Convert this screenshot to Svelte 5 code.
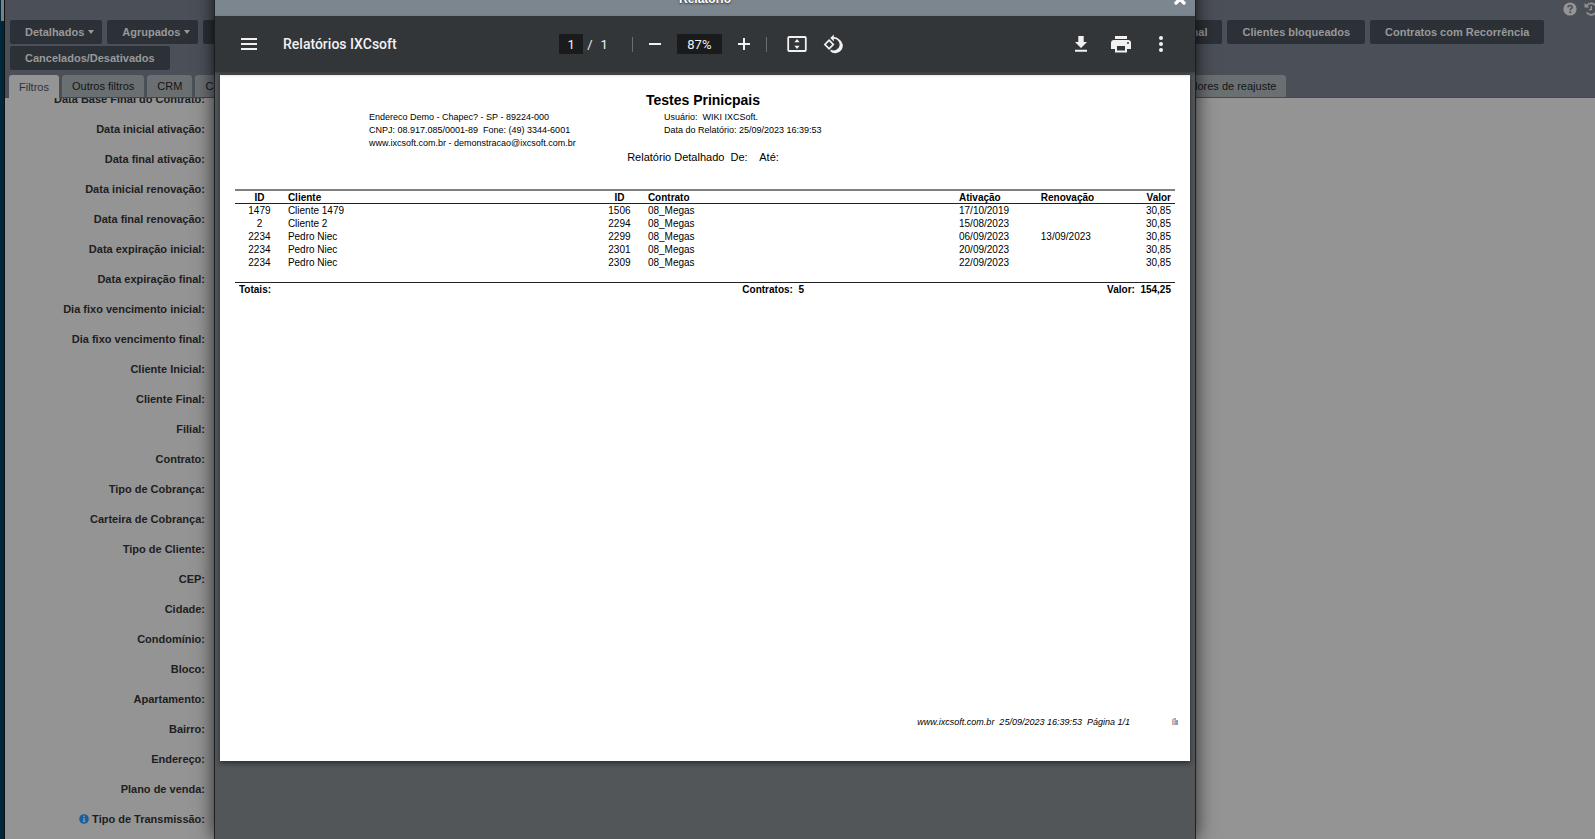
<script lang="ts">
    type Contract = {
        clientId: number,
        client: string,
        id: number,
        plan: string,
        activated: string,
        renewed: string,
        value: string,
    };

    const fields = [
        'Data Base Final do Contrato',
        'Data inicial ativação',
        'Data final ativação',
        'Data inicial renovação',
        'Data final renovação',
        'Data expiração inicial',
        'Data expiração final',
        'Dia fixo vencimento inicial',
        'Dia fixo vencimento final',
        'Cliente Inicial',
        'Cliente Final',
        'Filial',
        'Contrato',
        'Tipo de Cobrança',
        'Carteira de Cobrança',
        'Tipo de Cliente',
        'CEP',
        'Cidade',
        'Condomínio',
        'Bloco',
        'Apartamento',
        'Bairro',
        'Endereço',
        'Plano de venda',
        'Tipo de Transmissão',
    ];

    const contracts: Contract[] = [
        { clientId: 1479, client: 'Cliente 1479', id: 1506, plan: '08_Megas', activated: '17/10/2019', renewed: '', value: '30,85' },
        { clientId: 2, client: 'Cliente 2', id: 2294, plan: '08_Megas', activated: '15/08/2023', renewed: '', value: '30,85' },
        { clientId: 2234, client: 'Pedro Niec', id: 2299, plan: '08_Megas', activated: '06/09/2023', renewed: '13/09/2023', value: '30,85' },
        { clientId: 2234, client: 'Pedro Niec', id: 2301, plan: '08_Megas', activated: '20/09/2023', renewed: '', value: '30,85' },
        { clientId: 2234, client: 'Pedro Niec', id: 2309, plan: '08_Megas', activated: '22/09/2023', renewed: '', value: '30,85' },
    ];

    let page = $state('1');
    let zoom = $state('87%');
</script>

<div class="app">
    <aside class="rail"><div class="rail-top"></div></aside>

    <main class="window">
        <header>
            <div class="window-tools">
                <button aria-label="Ajuda">
                    <svg viewBox="0 0 14 14" width="14" height="14">
                        <circle cx="7" cy="7" r="6.6" fill="#949494" />
                        <path d="M4.9 5.4C5 4.1 5.9 3.5 7.1 3.5c1.2 0 2.1.7 2.1 1.8 0 1.4-2 1.5-2 3" fill="none" stroke="#4b5058" stroke-width="1.6" />
                        <rect x="6.3" y="9.3" width="1.8" height="1.7" fill="#4b5058" />
                    </svg>
                </button>
                <button aria-label="Histórico">
                    <svg viewBox="0 0 14 14" width="14" height="14" fill="none" stroke="#949494" stroke-width="1.7">
                        <path d="M2.2 4.2A5.7 5.7 0 1 1 2.6 10.6" />
                        <path d="M7.3 4v3.6H5" stroke-width="1.3" />
                        <path d="M.6 1v4.6h4.6z" fill="#949494" stroke="none" />
                    </svg>
                </button>
            </div>
            <nav class="actions">
                <button class="drop">Detalhados <i class="caret"></i></button>
                <button class="drop">Agrupados <i class="caret"></i></button>
                <button class="wide">Adicional</button>
                <button>Clientes bloqueados</button>
                <button>Contratos com Recorrência</button>
                <button>Cancelados/Desativados</button>
            </nav>
            <nav class="tabs">
                <button class="active">Filtros</button>
                <button>Outros filtros</button>
                <button>CRM</button>
                <button class="long">Contrato</button>
                <button>Valores de reajuste</button>
            </nav>
        </header>

        <div class="form-scroll">
            <form>
                {#each fields as field, i}
                    <div class="field">
                        <label for="field-{i}">
                            {#if field === 'Tipo de Transmissão'}
                                <svg class="info" viewBox="0 0 10 10" width="10" height="10">
                                    <circle cx="5" cy="5" r="4.8" fill="#1a5f9e" />
                                    <path d="M4 4h1.8v3.2h.7V8H3.8v-.8h.6V4.7H4zM4.3 1.8h1.5v1.3H4.3z" fill="#999" />
                                </svg>
                            {/if}{field}:</label>
                        <input id="field-{i}" type="text" />
                    </div>
                {/each}
            </form>
        </div>
    </main>

    <section class="modal">
        <div class="modal-title">
            <span>Relatório</span>
            <button aria-label="Fechar">
                <svg viewBox="0 0 14 14" width="14" height="14">
                    <path d="M3 3l8 8M11 3l-8 8" stroke="#fff" stroke-width="3.4" stroke-linecap="round" />
                </svg>
            </button>
        </div>

        <div class="toolbar">
            <div class="start">
                <button aria-label="Menu">
                    <svg viewBox="0 0 24 24"><path d="M4 6h16v2H4zM4 11h16v2H4zM4 16h16v2H4z" /></svg>
                </button>
                <h1>Relatórios IXCsoft</h1>
            </div>
            <div class="center">
                <input class="page-number" aria-label="Página" bind:value={page} />
                <span class="slash">/</span>
                <span class="total">1</span>
                <span class="separator"></span>
                <button aria-label="Diminuir zoom">
                    <svg viewBox="0 0 24 24"><path d="M6 11h12v2H6z" /></svg>
                </button>
                <input class="zoom" aria-label="Zoom" bind:value={zoom} />
                <button aria-label="Aumentar zoom">
                    <svg viewBox="0 0 24 24"><path d="M18 13h-5v5h-2v-5H6v-2h5V6h2v5h5z" /></svg>
                </button>
                <span class="separator after"></span>
                <button class="fit" aria-label="Ajustar à página">
                    <svg viewBox="0 0 24 24">
                        <rect x="3.2" y="5" width="17.600" height="14" rx="1" fill="none" stroke="#f1f1f1" stroke-width="1.8" />
                        <path d="M12 7l2.600 3.200H9.400zM12 17l2.600-3.200H9.400z" />
                    </svg>
                </button>
                <button aria-label="Girar">
                    <svg viewBox="0 0 24 24">
                        <path d="M7.34 6.41L.86 12.9l6.49 6.48 6.49-6.48zM3.69 12.9l3.66-3.66L11 12.9l-3.66 3.66zM19.36 6.64A8.95 8.95 0 0 0 13 4V.76L8.76 5 13 9.24V6a7 7 0 1 1-3.03 13.31l-1.49 1.49A9 9 0 1 0 19.36 6.64z" transform="translate(2 1.8) scale(.83)" />
                    </svg>
                </button>
            </div>
            <div class="end">
                <button aria-label="Baixar">
                    <svg viewBox="0 0 24 24"><path d="M18 10h-3.300V4H9.300v6H6l6 6zM6 17.700v2h12v-2z" /></svg>
                </button>
                <button aria-label="Imprimir">
                    <svg viewBox="0 0 24 24">
                        <path d="M19 8H5a3 3 0 0 0-3 3v6h4v3.500h12V17h4v-6a3 3 0 0 0-3-3zm-3 10.500H8V14h8zm3-6.500a1 1 0 1 1 0-2 1 1 0 0 1 0 2zM18 4H6v3h12z" />
                    </svg>
                </button>
                <button aria-label="Mais ações">
                    <svg viewBox="0 0 24 24"><circle cx="12" cy="6" r="2" /><circle cx="12" cy="12" r="2" /><circle cx="12" cy="18" r="2" /></svg>
                </button>
            </div>
        </div>

        <div class="viewer">
            <article class="sheet">
                <h2>Testes Prinicpais</h2>
                <div class="heading">
                    <div>
                        <p>Endereco Demo - Chapec? - SP - 89224-000</p>
                        <p>CNPJ: 08.917.085/0001-89&nbsp; Fone: (49) 3344-6001</p>
                        <p>www.ixcsoft.com.br - demonstracao@ixcsoft.com.br</p>
                    </div>
                    <div>
                        <p>Usuário:&nbsp; WIKI IXCSoft.</p>
                        <p>Data do Relatório: 25/09/2023 16:39:53</p>
                    </div>
                </div>
                <p class="period">Relatório Detalhado&nbsp; De:&nbsp;&nbsp;&nbsp; Até:</p>

                <table>
                    <colgroup>
                        <col class="col-id" />
                        <col class="col-name" />
                        <col class="col-id" />
                        <col class="col-name" />
                        <col class="col-date" />
                        <col class="col-date" />
                        <col />
                    </colgroup>
                    <thead>
                        <tr>
                            <th class="id">ID</th>
                            <th>Cliente</th>
                            <th class="id">ID</th>
                            <th>Contrato</th>
                            <th>Ativação</th>
                            <th>Renovação</th>
                            <th class="value">Valor</th>
                        </tr>
                    </thead>
                    <tbody>
                        {#each contracts as contract}
                            <tr>
                                <td class="id">{contract.clientId}</td>
                                <td>{contract.client}</td>
                                <td class="id">{contract.id}</td>
                                <td>{contract.plan}</td>
                                <td>{contract.activated}</td>
                                <td>{contract.renewed}</td>
                                <td class="value">{contract.value}</td>
                            </tr>
                        {/each}
                    </tbody>
                </table>

                <div class="totals">
                    <span>Totais:</span>
                    <span class="value">Contratos:&nbsp; 5</span>
                    <span class="value">Valor:&nbsp; 154,25</span>
                </div>

                <footer>
                    <span>www.ixcsoft.com.br&nbsp; 25/09/2023 16:39:53&nbsp; Página 1/1</span>
                    <svg viewBox="0 0 6 7" width="6" height="7">
                        <path d="M0 1h1.500v6H0z" fill="#d9a79a" />
                        <path d="M1.500 0H4v7H1.500z" fill="#a9a9ac" />
                        <path d="M4 2h2v5H4z" fill="#8d9fc0" />
                        <path d="M2 2h1v1H2zM2 4h1v1H2z" fill="#ddd" />
                    </svg>
                </footer>
            </article>
        </div>
    </section>
</div>

<style>
    :global(body) {
        margin: 0;
        overflow: hidden;
    }

    .app {
        position: relative;
        display: flex;
        height: 100vh;
        overflow: hidden;
        font-family: "Liberation Sans", Arial, sans-serif;
        font-size: 11px;
    }

    button {
        border: 0;
        padding: 0;
        background: none;
        font: inherit;
        color: inherit;
    }

    h1, h2, p {
        margin: 0;
    }

    .rail {
        width: 4px;
        flex: none;
        background: #00283b;
        border-right: 1px solid #0d0f11;
    }

    .rail-top {
        height: 21px;
        margin-left: 1px;
        background: #7d7f80;
    }

    .window {
        flex: 1;
        min-width: 0;
        display: flex;
        flex-direction: column;
        background: #949494;
    }

    header {
        display: flex;
        flex-direction: column;
        background: #4b5058;
        border-bottom: 1px solid #43484f;
    }

    .window-tools {
        display: flex;
        justify-content: flex-end;
        gap: 7px;
        height: 18px;
        padding-top: 2px;
        margin-right: -3px;

        button {
            display: flex;
            height: 14px;
        }
    }

    .actions {
        display: flex;
        flex-wrap: wrap;
        gap: 2px 5px;
        padding-left: 5px;

        button {
            height: 24px;
            padding: 0 15px;
            border-radius: 2px;
            background: #2b3137;
            color: #999;
            font-weight: bold;
        }

        .drop {
            padding: 0 8px 1px 15px;
        }

        .wide {
            width: 1019px;
            text-align: right;
        }
    }

    .caret {
        display: inline-block;
        margin-left: 1px;
        vertical-align: 2px;
        border: 3px solid transparent;
        border-top: 4px solid #999;
        border-bottom: 0;
    }

    .tabs {
        display: flex;
        gap: 3px;
        padding: 5px 0 0 4px;

        button {
            height: 22px;
            padding: 0 10px;
            border-radius: 3px 3px 0 0;
            background: #6a6f72;
            color: #141414;
        }

        .active {
            background: #949494;
            color: #2b3137;
            margin-bottom: -1px;
            height: 23px;
        }

        .long {
            width: 974px;
            text-align: left;
        }
    }

    .form-scroll {
        flex: 1;
        min-height: 0;
        overflow: hidden;
    }

    form {
        margin-top: -14px;
    }

    .field {
        display: flex;
        align-items: center;
        gap: 20px;
        height: 30px;

        label {
            width: 200px;
            text-align: right;
            font-weight: bold;
            color: #202020;
        }

        input {
            box-sizing: border-box;
            width: 240px;
            height: 20px;
            border: 1px solid #777;
            background: #949494;
        }
    }

    .info {
        margin-right: 3px;
        vertical-align: -1px;
    }

    /* the dialog is dragged partly above the top of the window */
    .modal {
        position: absolute;
        top: -18px;
        bottom: 0;
        left: 214px;
        right: 399px;
        display: flex;
        flex-direction: column;
        border: 1px solid #1e2224;
        border-width: 0 1px;
        background: #525659;
        box-shadow: 0 0 18px rgba(0, 0, 0, 0.75);
    }

    .modal-title {
        position: relative;
        display: flex;
        align-items: center;
        justify-content: center;
        height: 34px;
        background: #7c868f;
        color: #fff;
        font-size: 12px;
        font-weight: bold;
        text-shadow: 0 1px 2px #333;

        button {
            position: absolute;
            right: 8px;
            top: 10px;
            display: flex;
        }
    }

    .toolbar {
        position: relative;
        display: flex;
        align-items: center;
        height: 56px;
        padding: 0 18px;
        background: #323639;
        color: #f1f1f1;
        font-family: Roboto, sans-serif;
        font-size: 13px;
        box-shadow: 0 2px 4px rgba(0, 0, 0, 0.3);

        button {
            display: flex;
            align-items: center;
            justify-content: center;
            width: 32px;
            height: 32px;
        }

        svg {
            width: 24px;
            height: 24px;
            fill: #f1f1f1;
        }

        input {
            box-sizing: border-box;
            height: 20px;
            padding: 0;
            border: 0;
            background: #191b1c;
            color: #f1f1f1;
            font: inherit;
            text-align: center;
        }

        h1 {
            font-size: 14px;
            font-weight: 500;
        }
    }

    .start, .end {
        flex: 1;
        display: flex;
        align-items: center;
    }

    .start {
        gap: 18px;
    }

    .end {
        justify-content: flex-end;
        gap: 8px;
    }

    .center {
        display: flex;
        align-items: center;
        padding-right: 2px;

        .page-number {
            width: 24px;
        }

        .slash {
            margin: 0 8px 0 4px;
        }

        .zoom {
            width: 45px;
            margin: 0 6px;
        }

        .fit {
            margin-right: 4px;
        }
    }

    .separator {
        width: 1px;
        height: 15px;
        margin: 0 6px 0 24px;
        background: #6b6e70;
    }

    .separator.after {
        margin: 0 14px 0 6px;
    }

    .viewer {
        padding: 3px 5px 0;
    }

    .sheet {
        box-sizing: border-box;
        display: flex;
        flex-direction: column;
        aspect-ratio: 297 / 210;
        padding: 16px 15px 33px;
        background: #fff;
        color: #000;
        font-size: 10px;
        line-height: 13px;
        box-shadow: 0 2px 5px rgba(0, 0, 0, 0.5);
    }

    h2 {
        padding-right: 4px;
        margin-bottom: 2px;
        font-size: 14px;
        line-height: 18px;
        text-align: center;
    }

    .heading {
        display: grid;
        grid-template-columns: 295px 1fr;
        padding-left: 134px;
        font-size: 9px;
    }

    .period {
        padding-right: 4px;
        margin-bottom: 24px;
        font-size: 11px;
        line-height: 15px;
        text-align: center;
    }

    table {
        width: 100%;
        table-layout: fixed;
        border-spacing: 0;
    }

    .col-id { width: 5.2%; }
    .col-name { width: 33.1%; }
    .col-date { width: 8.7%; }

    th, td {
        padding: 0 4px;
        text-align: left;
    }

    th {
        padding-top: 1px;
        border-top: 2px solid #808080;
        border-bottom: 1px solid #222;
        line-height: 11px;
    }

    .id {
        text-align: center;
    }

    .value {
        text-align: right;
    }

    .totals {
        display: grid;
        grid-template-columns: 442fr 131fr 367fr;
        margin-top: 13px;
        border-top: 1px solid #222;
        font-weight: bold;

        span {
            padding: 0 4px;
        }
    }

    footer {
        display: flex;
        align-items: center;
        justify-content: flex-end;
        gap: 42px;
        margin: auto -3px 0 0;
        font-size: 9px;
        line-height: 12px;
        font-style: italic;
    }
</style>
